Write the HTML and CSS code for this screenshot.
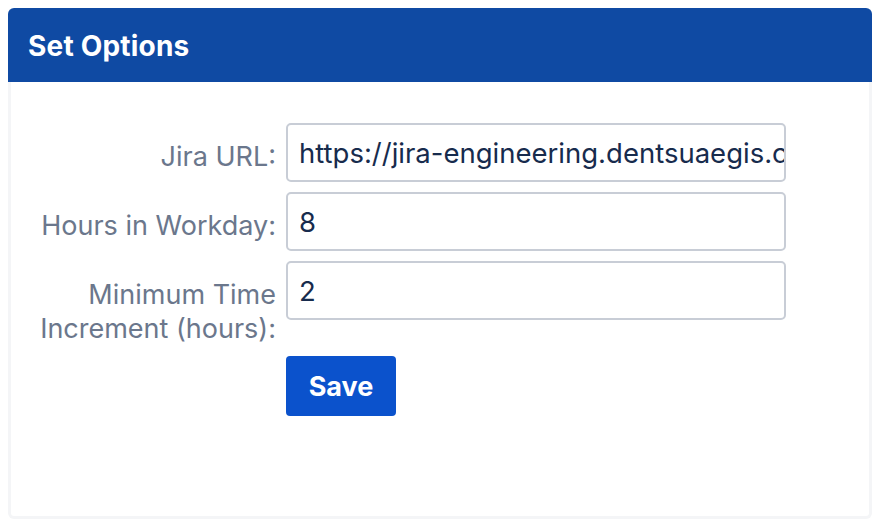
FILE: index.html
```html
<!DOCTYPE html>
<html lang="en">
<head>
<meta charset="utf-8">
<title>Set Options</title>
<link rel="stylesheet" href="styles.css">
</head>
<body>
<div class="card">
  <div class="card-header"><h1 class="title">Set Options</h1></div>
  <div class="card-body">
    <form class="form">
      <label class="label" for="jira">Jira URL:</label>
      <input class="field" id="jira" type="text" value="https://jira-engineering.dentsuaegis.com">
      <label class="label" for="hours">Hours in Workday:</label>
      <input class="field" id="hours" type="text" value="8">
      <label class="label" for="inc">Minimum Time<br>Increment (hours):</label>
      <input class="field" id="inc" type="text" value="2">
      <div class="actions"><button class="btn" type="button">Save</button></div>
    </form>
  </div>
</div>
</body>
</html>
```
FILE: styles.css
```css
html, body { background: #ffffff; }
body {
  margin: 8px;
  font-family: Inter, "Noto Sans", sans-serif;
}
.card {
  width: 864px;
}
.card-header {
  background: #0f4aa3;
  height: 74px;
  border-radius: 6px 6px 0 0;
  display: flex;
  align-items: center;
  padding-left: 20px;
}
.title {
  margin: 0;
  color: #ffffff;
  font-size: 28px;
  font-weight: 700;
  letter-spacing: 0.2px;
  padding-top: 2px;
}
.card-body {
  height: 437px;
  box-sizing: border-box;
  border: 3px solid #f4f5f7;
  border-top: 0;
  border-radius: 0 0 6px 6px;
  padding-top: 41px;
}
.form {
  display: grid;
  grid-template-columns: 265px 500px;
  column-gap: 10px;
  row-gap: 10px;
}
.label {
  text-align: right;
  color: #6b778c;
  font-size: 27px;
  line-height: 34px;
  padding-top: 17px;
}
.field {
  box-sizing: border-box;
  width: 500px;
  height: 59px;
  border: 2px solid #c8cdd6;
  border-radius: 5px;
  padding: 0 0 0 11px;
  font-family: inherit;
  font-size: 27.5px;
  color: #172b4d;
  background: #fff;
  outline: none;
}
.actions {
  grid-column: 2;
  padding-top: 0;
}
.btn {
  width: 110px;
  height: 60px;
  border: 0;
  border-radius: 4px;
  background: #0b52cc;
  color: #fff;
  font-family: inherit;
  font-size: 27px;
  font-weight: 700;
  padding: 0;
}
```
